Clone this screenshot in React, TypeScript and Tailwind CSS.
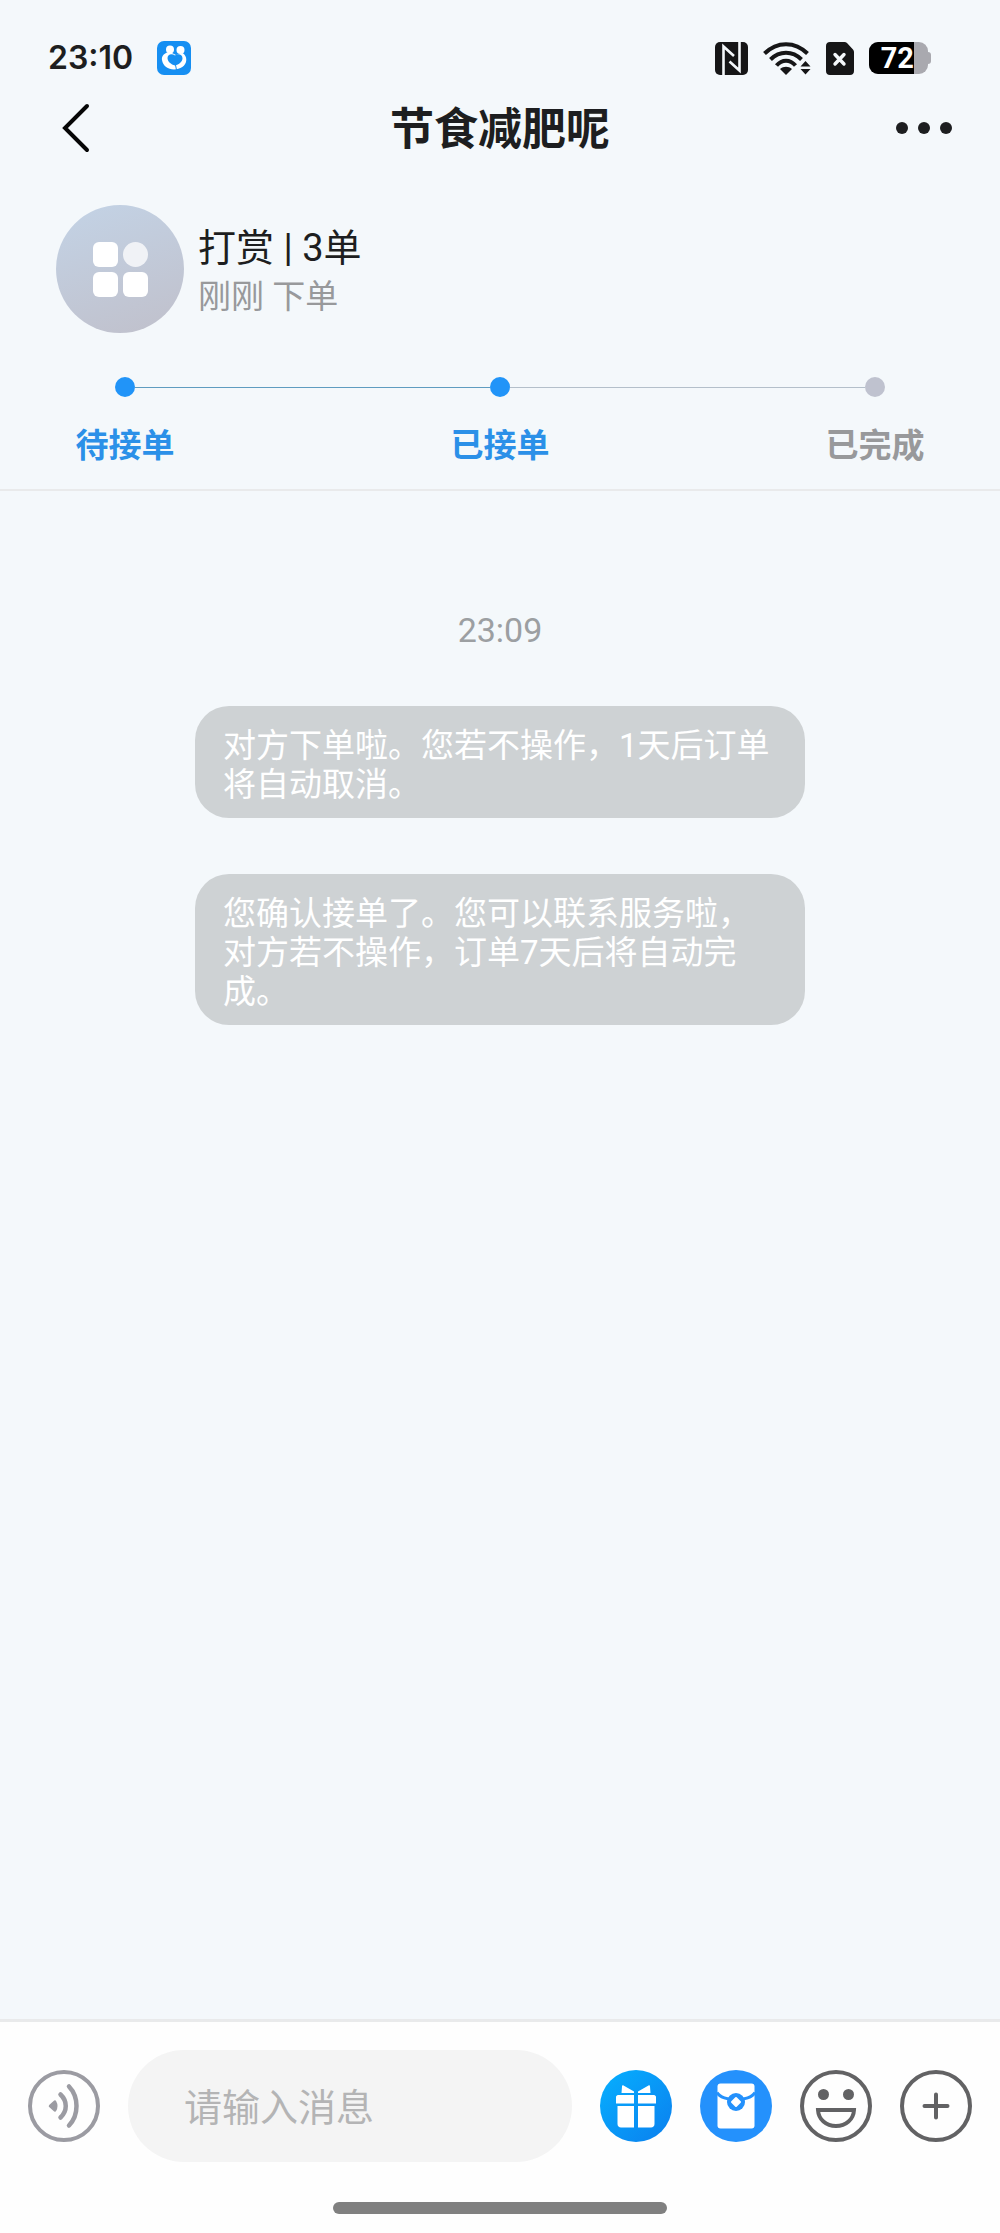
import { useState } from "react";

const mensagens = [
  { id: 1, texto: "对方下单啦。您若不操作，1天后订单将自动取消。" },
  {
    id: 2,
    texto: "您确认接单了。您可以联系服务啦，对方若不操作，订单7天后将自动完成。",
  },
];

function AppBadgeIcon() {
  return (
    <svg width="34" height="34" viewBox="0 0 34 34" aria-hidden="true">
      <rect width="34" height="34" rx="7" fill="#168ff2" />
      <circle cx="13" cy="8.500" r="4" fill="#fff" />
      <circle cx="23.500" cy="9" r="4" fill="#fff" />
      <path
        d="M10 11.500C6 13 4.500 16 5 19C6 25 11 28.500 17 28.500C23 28.500 29 25 29.300 19C29.400 16 28 13.500 25.500 12L19 14L15 12Z"
        fill="#fff"
      />
      <path
        d="M18 24.500C14 23.500 10.500 20.500 10.500 17C10.500 13 15 12 18 14.500C21 12 25.500 13.500 25.500 17.200C25.500 20.500 22 23.500 18 24.500Z"
        fill="#168ff2"
      />
      <path d="M18.500 24L19.500 29" stroke="#168ff2" strokeWidth="1" />
    </svg>
  );
}

function NfcIcon() {
  return (
    <svg width="33" height="33" viewBox="0 0 33 33" fill="none" aria-hidden="true">
      <rect width="33" height="33" rx="5" fill="#161617" />
      <path
        d="M8.500 33V4.500L19 14M24.500 0V28.500L14.500 19.500"
        stroke="#f4f8fb"
        strokeWidth="2.600"
      />
    </svg>
  );
}

function WifiIcon() {
  return (
    <svg width="48" height="33" viewBox="0 0 48 33" fill="none" aria-hidden="true">
      <g stroke="#161617" strokeWidth="4">
        <path d="M1.500 11.500C14 -1 32 -1 44.500 11.500" />
        <path d="M7.500 17.500C16.500 8.500 29.500 8.500 38.500 17.500" />
        <path d="M13.500 23.500C19 17 27 17 32.500 23.500" />
      </g>
      <path d="M17 27C20.500 24 25.500 24 29 27L23 33Z" fill="#161617" />
      <path d="M42.500 19L47.500 24.500H37.500ZM42.500 32.500L47.500 27H37.500Z" fill="#161617" />
    </svg>
  );
}

function SimIcon() {
  return (
    <svg width="28" height="33" viewBox="0 0 28 33" fill="none" aria-hidden="true">
      <path
        d="M4 0H18.500C19.500 0 20.300 .400 21 1L27 7.500C27.700 8.200 28 9 28 10V29C28 31.500 26.500 33 24 33H4C1.500 33 0 31.500 0 29V4C0 1.500 1.500 0 4 0Z"
        fill="#161617"
      />
      <path
        d="M9 12.500L18 22M18 12.500L9 22"
        stroke="#f4f8fb"
        strokeWidth="3.400"
        strokeLinecap="round"
      />
    </svg>
  );
}

function Bateria() {
  return (
    <div className="flex items-center">
      <div className="flex h-8 w-[59px] overflow-hidden rounded-[9px] bg-[#a9a9af]">
        <span className="flex w-[45px] items-center justify-end bg-black text-[29px] leading-8 font-bold text-white">
          72
        </span>
      </div>
      <div className="h-3 w-[3px] rounded-r-sm bg-[#a9a9af]" />
    </div>
  );
}

function VoiceIcon() {
  return (
    <svg width="72" height="72" viewBox="0 0 72 72" fill="none" aria-hidden="true">
      <g stroke="#9b9ba2" strokeWidth="4">
        <circle cx="36" cy="36" r="34" />
        <g strokeWidth="4.500" strokeLinecap="round">
          <path d="M32.500 24.500C39.500 31 39.500 41 32.500 47.500" />
          <path d="M41 16.500C51 27 51 45 41 55.500" />
        </g>
      </g>
      <path
        d="M22 36L27 31.500Q29.500 36 27 40.500Z"
        fill="#9b9ba2"
        stroke="#9b9ba2"
        strokeWidth="2.500"
        strokeLinejoin="round"
      />
    </svg>
  );
}

function GiftIcon() {
  return (
    <svg width="72" height="72" viewBox="0 0 72 72" aria-hidden="true">
      <defs>
        <linearGradient id="gift" x1="0" y1="0" x2="1" y2="1">
          <stop offset="0" stopColor="#06b0ff" />
          <stop offset="1" stopColor="#0b7fee" />
        </linearGradient>
      </defs>
      <circle cx="36" cy="36" r="36" fill="url(#gift)" />
      <g fill="#fff">
        <path d="M23.500 15.500L34 21.500V23H21.500L22 16.500C22.100 15.500 22.700 15 23.500 15.500Z" />
        <path d="M48.500 15.500L38 21.500V23H50.500L50 16.500C49.900 15.500 49.300 15 48.500 15.500Z" />
        <path d="M18 25H34V33.500H16V27C16 26 17 25 18 25Z" />
        <path d="M38 25H54C55 25 56 26 56 27V33.500H38Z" />
        <path d="M17.500 36H34V57.500H21C19 57.500 17.500 56 17.500 54Z" />
        <path d="M38 36H54.500V54C54.500 56 53 57.500 51 57.500H38Z" />
      </g>
    </svg>
  );
}

function EnvelopeIcon() {
  return (
    <svg width="72" height="72" viewBox="0 0 72 72" fill="none" aria-hidden="true">
      <circle cx="36" cy="36" r="36" fill="#2491fc" />
      <rect x="17.500" y="13.500" width="37" height="45" rx="3" fill="#fff" />
      <path d="M17 22.500C22 32 50 32 55 22.500" stroke="#2491fc" strokeWidth="3" />
      <circle cx="36" cy="32" r="9" fill="#2491fc" />
      <path
        d="M36 28L38 30L40 32L38 34L36 36L34 34L32 32L34 30Z"
        fill="#fff"
        stroke="#fff"
        strokeWidth="2"
        strokeLinejoin="round"
      />
    </svg>
  );
}

function SmileIcon() {
  return (
    <svg width="72" height="72" viewBox="0 0 72 72" fill="none" aria-hidden="true">
      <g stroke="#626264" strokeWidth="4">
        <circle cx="36" cy="36" r="34" />
        <path d="M18 40H54C53.500 49.500 46 56 36 56S18.500 49.500 18 40Z" />
      </g>
      <circle cx="23.500" cy="24.500" r="5.500" fill="#626264" />
      <circle cx="48.500" cy="24.500" r="5.500" fill="#626264" />
    </svg>
  );
}

function PlusIcon() {
  return (
    <svg width="72" height="72" viewBox="0 0 72 72" fill="none" aria-hidden="true">
      <g stroke="#626264" strokeWidth="4" strokeLinecap="round">
        <circle cx="36" cy="36" r="34" />
        <path d="M24.500 36H47.500M36 24.500V47.500" />
      </g>
    </svg>
  );
}

function PedidoAvatar() {
  return (
    <div className="flex size-32 shrink-0 items-center justify-center rounded-full bg-linear-160 from-[#c3d3e6] to-[#c0c0cb]">
      <div className="grid grid-cols-2 gap-[5px]">
        <span className="size-[25px] rounded-md bg-white" />
        <span className="size-[25px] rounded-full bg-[#f0f2f6]" />
        <span className="size-[25px] rounded-md bg-white" />
        <span className="size-[25px] rounded-md bg-white" />
      </div>
    </div>
  );
}

export default function App() {
  const [texto, setTexto] = useState("");

  return (
    <div className="flex min-h-screen flex-col bg-[#f4f8fb] font-[Roboto,'Noto_Sans_CJK_SC',sans-serif] text-[#1d1e20]">
      <header className="border-b-2 border-[#e9eaeb]">
        {/* STATUS */}
        <div className="flex h-20 items-center justify-between pt-9 pr-[69px] pl-12">
          <div className="flex items-center gap-6">
            <span className="font-[Inter,sans-serif] text-[32px] leading-10 font-semibold">
              23:10
            </span>
            <AppBadgeIcon />
          </div>
          <div className="flex items-center gap-[15px]">
            <NfcIcon />
            <WifiIcon />
            <SimIcon />
            <Bateria />
          </div>
        </div>

        {/* TITULO */}
        <div className="flex h-24 items-center justify-between px-11">
          <button type="button" aria-label="返回" className="flex w-16 justify-center">
            <svg width="28" height="50" viewBox="0 0 28 50" fill="none">
              <path
                d="M25 3L3 25L25 47"
                stroke="#060606"
                strokeWidth="4"
                strokeLinecap="round"
              />
            </svg>
          </button>
          <h1 className="pt-1 text-[44px] leading-[60px] font-bold">节食减肥呢</h1>
          <button
            type="button"
            aria-label="更多"
            className="flex w-16 justify-center gap-[10px]"
          >
            <span className="size-3 shrink-0 rounded-full bg-[#1d1e20]" />
            <span className="size-3 shrink-0 rounded-full bg-[#1d1e20]" />
            <span className="size-3 shrink-0 rounded-full bg-[#1d1e20]" />
          </button>
        </div>

        {/* PEDIDO */}
        <div className="flex items-center gap-[14px] px-14 pt-[29px]">
          <PedidoAvatar />
          <div className="pt-1">
            <p className="text-[38px] leading-[52px]">打赏 | 3单</p>
            <p className="text-[33px] leading-[46px] text-[#98999b]">刚刚 下单</p>
          </div>
        </div>

        {/* ETAPAS */}
        <div className="mt-11 flex items-center px-[115px]">
          <span className="size-5 rounded-full bg-[#2194f8]" />
          <span className="h-px flex-1 bg-[#5f9cc0]" />
          <span className="size-5 rounded-full bg-[#2194f8]" />
          <span className="h-px flex-1 bg-[#b4bfca]" />
          <span className="size-5 rounded-full bg-[#bfc2cf]" />
        </div>
        <div className="mt-[27px] flex justify-between px-[65px] pb-[21px] text-center text-[33px] leading-[44px] font-bold">
          <span className="w-[120px] text-[#2b90e8]">待接单</span>
          <span className="w-[120px] text-[#2b90e8]">已接单</span>
          <span className="w-[120px] text-[#98999b]">已完成</span>
        </div>
      </header>

      {/* MENSAGENS */}
      <main className="flex flex-1 flex-col items-center gap-14 pt-[119px]">
        <time className="text-[34px] leading-10 text-[#9c9fa2]">23:09</time>
        {mensagens.map((m) => (
          <p
            key={m.id}
            className="w-[61%] rounded-[34px] bg-[#ced2d4] px-7 pt-5 pb-[14px] text-[33px] leading-[39px] text-white"
          >
            {m.texto}
          </p>
        ))}
      </main>

      {/* RODAPE */}
      <footer className="border-t-3 border-[#e9eaeb] bg-[#fefefe] pb-[19px]">
        <div className="flex items-center gap-7 px-7 pt-7">
          <button type="button" aria-label="语音">
            <VoiceIcon />
          </button>
          <input
            type="text"
            aria-label="请输入消息"
            value={texto}
            onChange={(e) => setTexto(e.target.value)}
            placeholder="请输入消息"
            className="h-28 min-w-0 flex-1 rounded-full bg-[#f4f4f4] px-14 pt-1 text-[38px] placeholder:text-[#b4b4b5] focus:outline-none"
          />
          <button type="button" aria-label="礼物">
            <GiftIcon />
          </button>
          <button type="button" aria-label="红包">
            <EnvelopeIcon />
          </button>
          <button type="button" aria-label="表情">
            <SmileIcon />
          </button>
          <button type="button" aria-label="添加">
            <PlusIcon />
          </button>
        </div>
        <div className="mx-auto mt-10 h-3 w-1/3 rounded-full bg-[#808080]" />
      </footer>
    </div>
  );
}
